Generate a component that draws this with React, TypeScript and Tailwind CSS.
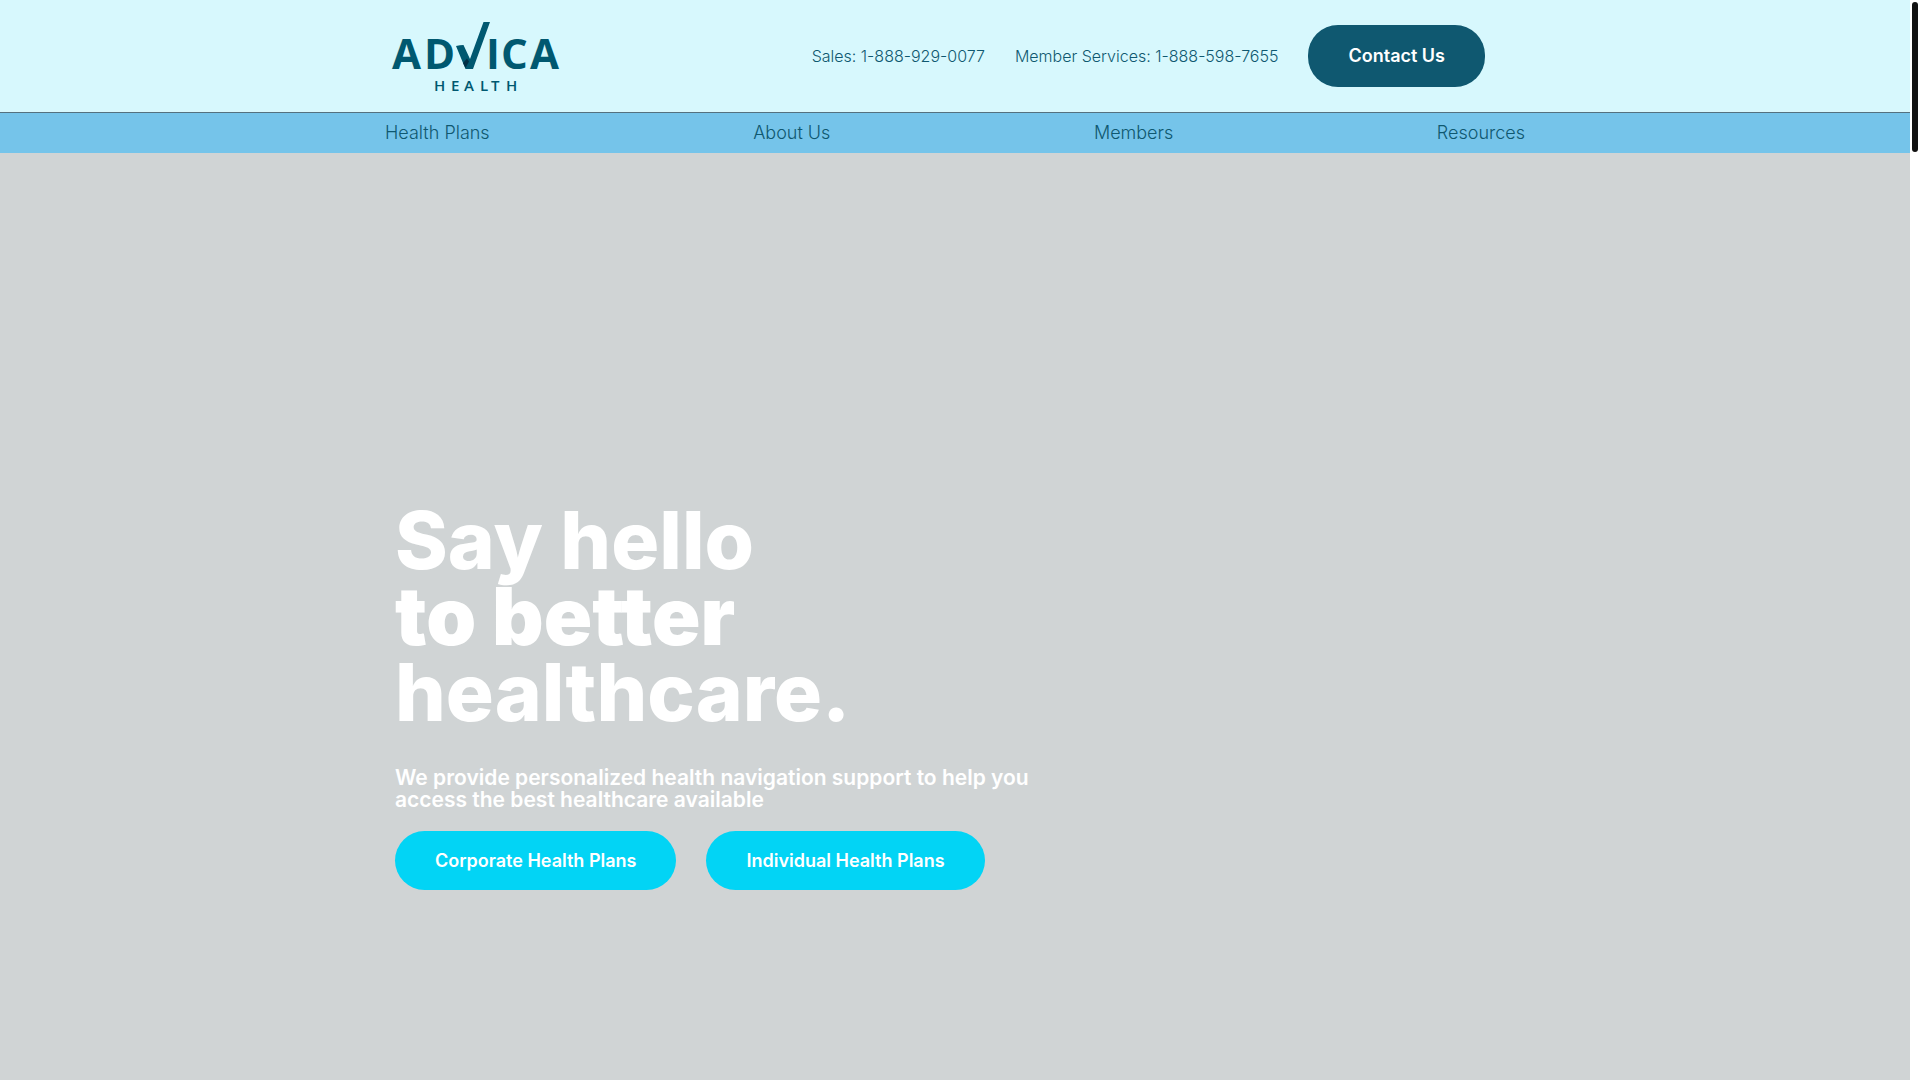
const navLinks = ["Health Plans", "About Us", "Members", "Resources"];

const plans = ["Corporate Health Plans", "Individual Health Plans"];

function Logo() {
  return (
    <a href="#home" aria-label="Advica Health">
      <svg
        width="168"
        height="74"
        viewBox="0 0 168 74"
        fill="#005870"
        className="overflow-visible"
      >
        <g fontFamily="'Open Sans', sans-serif" fontSize="42" fontWeight="700">
          <text x="0 32" y="50">AD</text>
          <text x="94 109 138" y="50">ICA</text>
        </g>
        <path d="M64 27q4 -1 7.500 -1l6.500 14L91.500 3h6.500L81 50h-7.500z" />
        <path d="M71 44l4 -4.500 2 3 -3.500 6.500z" fill="#012f45" />
        <text
          x="42 59 72 88 99 114"
          y="72"
          fontFamily="'Open Sans', sans-serif"
          fontSize="15"
          fontWeight="600"
        >
          HEALTH
        </text>
      </svg>
    </a>
  );
}

function Header() {
  return (
    <header className="bg-[#d7f8fd] border-b border-[#54717f]">
      <div className="mx-auto flex h-28 max-w-[1140px] items-center justify-between pl-[7px] pr-10">
        <Logo />
        <div className="flex items-center gap-[30px] text-base font-light text-[#0f5870]">
          <a href="tel:18889290077">Sales: 1-888-929-0077</a>
          <a href="tel:18885987655">Member Services: 1-888-598-7655</a>
          <button className="rounded-[30px] bg-[#0f5870] px-10 py-[19px] text-lg leading-6 font-semibold text-white">
            Contact Us
          </button>
        </div>
      </div>
    </header>
  );
}

function Nav() {
  return (
    <nav className="bg-[#75c4ea]">
      <ul className="mx-auto flex h-10 max-w-[1140px] items-center justify-between text-lg font-light text-[#0f5870]">
        {navLinks.map((link) => (
          <li key={link}>
            <a href="#menu">{link}</a>
          </li>
        ))}
      </ul>
    </nav>
  );
}

function Hero() {
  return (
    <main className="flex-1 bg-[#d0d4d5]">
      <div className="mx-auto max-w-[1140px] px-[10px] pt-[349px] text-white">
        <h1 className="text-[80px] leading-[76px] font-extrabold">
          Say hello
          <br />
          <strong className="font-black">to better</strong>
          <br />
          healthcare.
        </h1>
        <p className="mt-[37px] text-[21px] leading-[22px] font-semibold">
          We provide personalized health navigation support to help you
          <br />
          access the best healthcare available
        </p>
        <div className="mt-5 flex gap-[30px]">
          {plans.map((plan) => (
            <button
              key={plan}
              className="rounded-[30px] bg-[#02d4f5] px-10 py-[18px] text-lg leading-[23px] font-semibold"
            >
              {plan}
            </button>
          ))}
        </div>
      </div>
    </main>
  );
}

export default function App() {
  return (
    <div className="flex min-h-screen bg-white font-['Inter',sans-serif]">
      <div className="flex flex-1 flex-col">
        <Header />
        <Nav />
        <Hero />
      </div>
      {/* scroll thumb */}
      <div className="w-[10px] p-[2px]">
        <div className="h-[150px] w-[6px] rounded-full bg-[#111111]" />
      </div>
    </div>
  );
}
